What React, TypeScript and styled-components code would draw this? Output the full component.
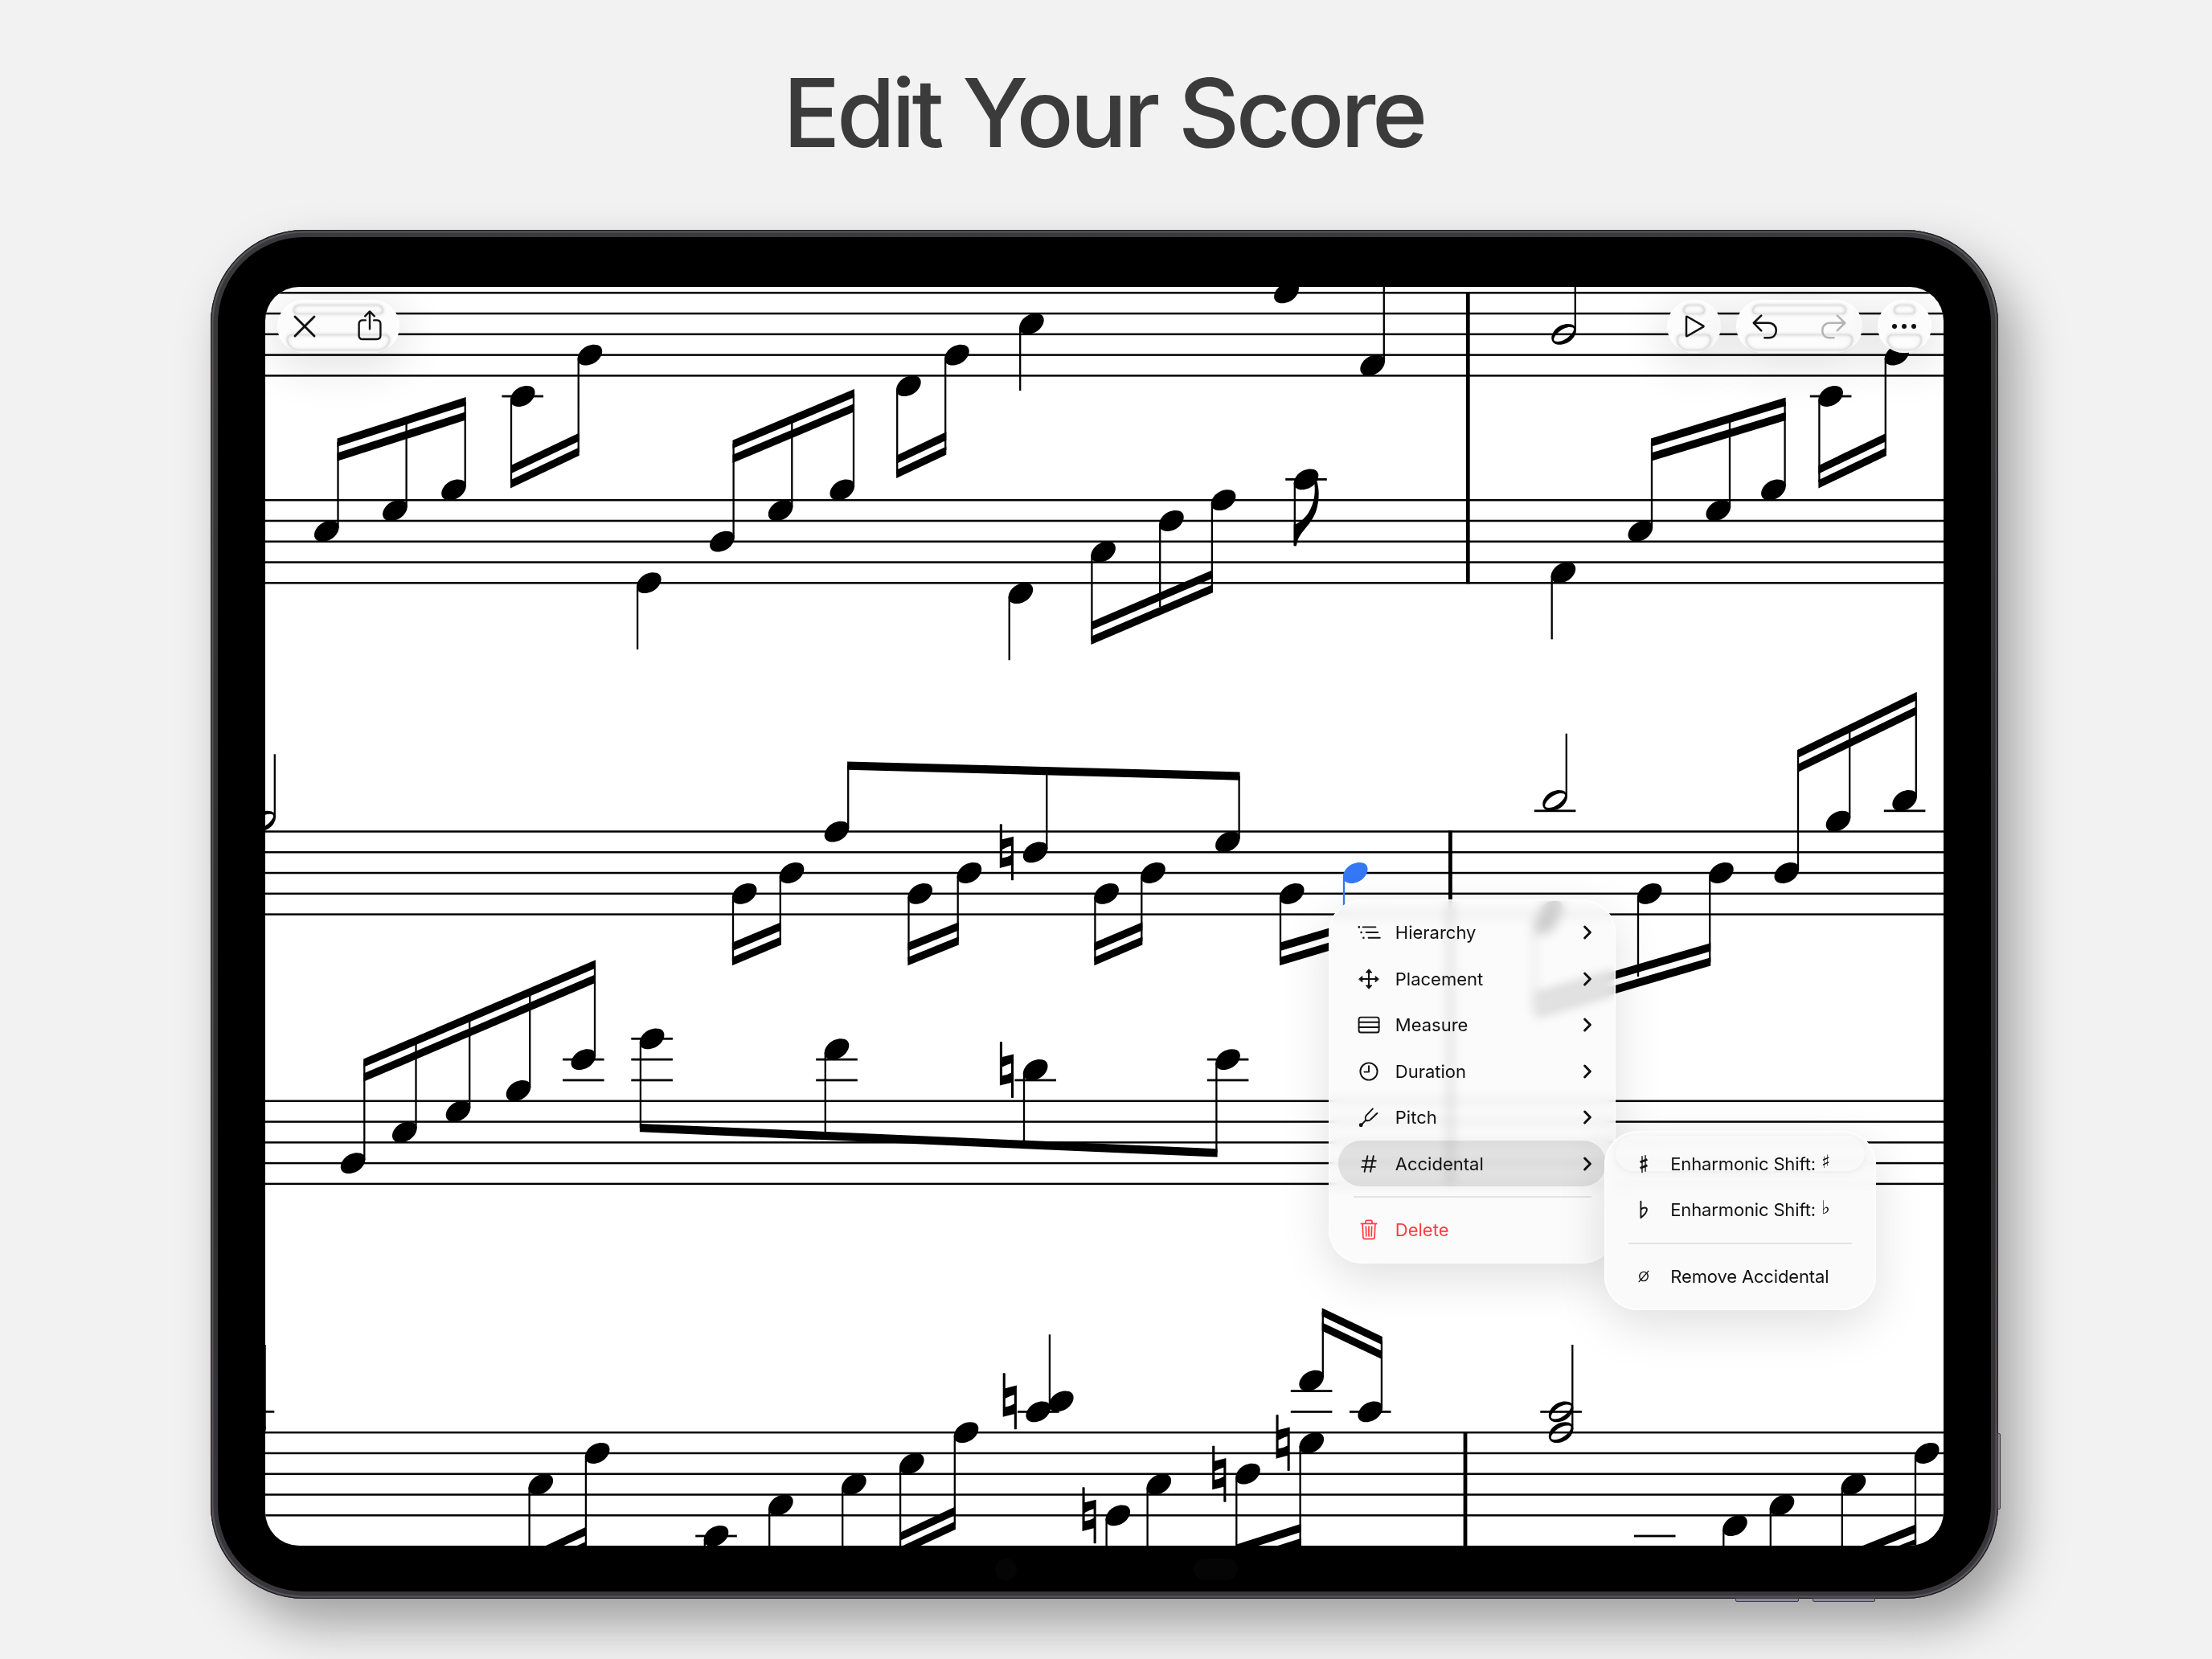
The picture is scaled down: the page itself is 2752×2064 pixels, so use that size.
import React from 'react'
import styled, { createGlobalStyle, css } from 'styled-components'

type Point = [number, number]

type NoteProps = {
  x: number
  y: number
  // y of the far end of the stem
  stem?: number
  half?: boolean
  natural?: boolean
  ledgers?: number[]
  color?: string
}

type BeamProps = {
  from: Point
  to: Point
  // the edge the two points lie on
  edge: 'top' | 'bottom'
  double?: boolean
}

const STAFF_GAP = 25.77
const BEAM = 10.3
const BEAM_STEP = 18.05
const STEM_X = 14.2

const HEAD =
  'M-15.3 4.6C-15.3-4-5.4-12.9 5-12.9C12-12.9 15.3-9.4 15.3-4.6C15.3 4 5.4 12.9-5 12.9C-12 12.9-15.3 9.4-15.3 4.6Z'
const HOLE =
  'M-12.4 6.4C-12.4 1.6-2-8.8 7.6-8.8C11-8.8 12.4-8.2 12.4-6.2C12.4-1.6 2 9-7.4 9C-11 9-12.4 8.4-12.4 6.4Z'

const staves = [364.3, 622.2, 1034.5, 1369.8, 1782.2]

const barlines = [
  { x: 1826.3, y1: 363.2, y2: 726.4 },
  { x: 1804.4, y1: 1033.3, y2: 1474.2 },
  { x: 1823, y1: 1781, y2: 1940 },
]

const looseLedgers: [number, number][] = [
  [315.5, 1756.3],
  [2058.7, 1911],
]

const notes: NoteProps[] = [
  // first system
  { x: 406.3, y: 660.8, stem: 550 },
  { x: 491.4, y: 635.1, stem: 525 },
  { x: 564.5, y: 609.3, stem: 500 },
  { x: 650.2, y: 493, stem: 600, ledgers: [493] },
  { x: 733.9, y: 441.6, stem: 562 },
  { x: 807.3, y: 725.2, stem: 808 },
  { x: 898.4, y: 673.7, stem: 552 },
  { x: 971.1, y: 635.1, stem: 520 },
  { x: 1047.8, y: 609.3, stem: 490 },
  { x: 1130.4, y: 480.2, stem: 590 },
  { x: 1190.4, y: 441.6, stem: 560 },
  { x: 1283.4, y: 402.9, stem: 486 },
  { x: 1600.4, y: 364.3, stem: 340 },
  { x: 1707.6, y: 454.4, stem: 340 },
  { x: 1269.9, y: 738.1, stem: 821.3 },
  { x: 1372.6, y: 686.6, stem: 797 },
  { x: 1457.4, y: 648, stem: 755 },
  { x: 1522.1, y: 622.2, stem: 733 },
  { x: 1625, y: 596.4, stem: 679, ledgers: [596.4] },
  { x: 1945.6, y: 415.9, stem: 340, half: true },
  { x: 2040.8, y: 660.8, stem: 550 },
  { x: 2137.8, y: 635.1, stem: 520 },
  { x: 2206.4, y: 609.3, stem: 500 },
  { x: 2277.6, y: 493, stem: 600, ledgers: [493] },
  { x: 2360, y: 441.6, stem: 562 },
  { x: 1944.9, y: 712.3, stem: 795.4 },

  // second system
  { x: 327.6, y: 1021.6, stem: 938.3, half: true },
  { x: 439.1, y: 1447.1, stem: 1322 },
  { x: 503.3, y: 1408.4, stem: 1295 },
  { x: 570, y: 1382.6, stem: 1266 },
  { x: 645, y: 1356.9, stem: 1234 },
  { x: 725.8, y: 1318.1, stem: 1200, ledgers: [1318.1, 1343.9] },
  { x: 811.1, y: 1292.3, stem: 1403, ledgers: [1292.3, 1318.1, 1343.9] },
  { x: 1041, y: 1305.2, stem: 1412, ledgers: [1318.1, 1343.9] },
  { x: 1288.2, y: 1331, stem: 1422, ledgers: [1343.9], natural: true },
  { x: 1527.6, y: 1318.1, stem: 1434, ledgers: [1318.1, 1343.9] },
  { x: 1041, y: 1034.6, stem: 952 },
  { x: 1288.1, y: 1060.3, stem: 958, natural: true },
  { x: 1527.4, y: 1047.4, stem: 965 },
  { x: 926.2, y: 1111.8, stem: 1196 },
  { x: 985, y: 1086, stem: 1171 },
  { x: 1144.7, y: 1111.8, stem: 1196 },
  { x: 1205.9, y: 1086, stem: 1171 },
  { x: 1376.6, y: 1111.8, stem: 1196 },
  { x: 1434.5, y: 1086, stem: 1171 },
  { x: 1607.2, y: 1111.8, stem: 1196 },
  { x: 1686.2, y: 1086, stem: 1140, color: '#3478f6' },
  { x: 1934.6, y: 995.9, stem: 912.7, half: true, ledgers: [1008.8] },
  { x: 2222.8, y: 1086, stem: 938 },
  { x: 2287, y: 1021.7, stem: 905 },
  { x: 2369.6, y: 995.9, stem: 866, ledgers: [1008.8] },
  { x: 1929, y: 1134 },
  { x: 1923, y: 1149, stem: 1260 },
  { x: 2052.2, y: 1111.8, stem: 1215 },
  { x: 2141.4, y: 1086, stem: 1197 },

  // third system
  { x: 315.4, y: 1782.2, stem: 1673 },
  { x: 672.8, y: 1846.6, stem: 1940 },
  { x: 743.1, y: 1808, stem: 1925 },
  { x: 891, y: 1911, stem: 1940, ledgers: [1911] },
  { x: 971.4, y: 1872.4, stem: 1940 },
  { x: 1062.4, y: 1846.6, stem: 1940 },
  { x: 1134.3, y: 1820.9, stem: 1930 },
  { x: 1202, y: 1782.2, stem: 1897 },
  { x: 1291.7, y: 1756.4, stem: 1660.3, ledgers: [1756.4] },
  { x: 1631.6, y: 1717.7, stem: 1632, ledgers: [1730.6, 1756.4] },
  { x: 1704.7, y: 1756.4, stem: 1668, ledgers: [1756.4] },
  { x: 1631.8, y: 1795.1, stem: 1940, natural: true },
  { x: 1552.5, y: 1833.7, stem: 1940, natural: true },
  { x: 1390.8, y: 1885.3, stem: 1940, natural: true },
  { x: 1441.8, y: 1846.6, stem: 1940 },
  { x: 1942.1, y: 1756.4, half: true, ledgers: [1756.4] },
  { x: 1942.1, y: 1782.2, stem: 1673, half: true },
  { x: 2158.5, y: 1898.2, stem: 1940 },
  { x: 2217, y: 1872.4, stem: 1940 },
  { x: 2306, y: 1846.6, stem: 1940 },
  { x: 2397.2, y: 1808, stem: 1940 },
]

const beams: BeamProps[] = [
  { from: [419.5, 545.4], to: [579.7, 494.1], edge: 'top', double: true },
  { from: [635, 607.5], to: [720.7, 566.8], edge: 'bottom', double: true },
  { from: [911.5, 547.7], to: [1063, 484], edge: 'top', double: true },
  { from: [1115.1, 595], to: [1177.3, 565.7], edge: 'bottom', double: true },
  { from: [1357.4, 802], to: [1509, 737.3], edge: 'bottom', double: true },
  { from: [2054, 545.4], to: [2221.6, 494.6], edge: 'top', double: true },
  { from: [2262.4, 607.5], to: [2346.9, 567], edge: 'bottom', double: true },
  { from: [452.2, 1317.5], to: [741, 1194.3], edge: 'top', double: true },
  { from: [795.9, 1408.2], to: [1514.6, 1439.6], edge: 'bottom' },
  { from: [1054.1, 947.5], to: [1542.6, 960.5], edge: 'top' },
  { from: [910.9, 1201.2], to: [972, 1175.5], edge: 'bottom', double: true },
  { from: [1129.4, 1201.2], to: [1192.8, 1175.5], edge: 'bottom', double: true },
  { from: [1361.3, 1201.2], to: [1421.4, 1175.5], edge: 'bottom', double: true },
  { from: [1592, 1201.2], to: [1654, 1182.8], edge: 'bottom', double: true },
  { from: [2236, 933], to: [2384.8, 860.7], edge: 'top', double: true },
  { from: [1910.8, 1265], to: [2128.3, 1201.5], edge: 'bottom', double: true },
  { from: [657.6, 1961.3], to: [730, 1927.7], edge: 'bottom', double: true },
  { from: [1119, 1935.3], to: [1188.9, 1902.7], edge: 'bottom', double: true },
  { from: [1644.7, 1627.3], to: [1719.8, 1663], edge: 'top', double: true },
  { from: [1537.4, 1950.1], to: [1618.8, 1924], edge: 'bottom', double: true },
  { from: [2290.8, 1962], to: [2384.1, 1924.7], edge: 'bottom', double: true },
]

const Note = ({ x, y, stem, half, natural, ledgers = [], color = '#000' }: NoteProps) => {
  const up = stem !== undefined && stem < y
  const stemX = up ? x + STEM_X : x - STEM_X
  return (
    <g fill={color} stroke="none">
      {ledgers.map(ly => (
        <rect key={ly} x={x - 25.8} y={ly - 1.4} width={51.6} height={2.8} />
      ))}
      {stem !== undefined && (
        <line x1={stemX} x2={stemX} y1={up ? y - 4 : y + 4} y2={stem} stroke={color} strokeWidth={2.3} />
      )}
      <path d={half ? HEAD + HOLE : HEAD} fillRule="evenodd" transform={`translate(${x} ${y})`} />
      {natural && <Natural x={x - 35.7} y={y} />}
    </g>
  )
}

const Natural = ({ x, y }: { x: number; y: number }) => (
  <path
    transform={`translate(${x} ${y})`}
    fillRule="evenodd"
    d="M-8.6-34.2Q-8.6-35-7.8-35H-6.3Q-5.5-35-5.5-34.2V-16L8.6-19.6V34.2Q8.6 35 7.8 35H6.3Q5.5 35 5.5 34.2V16L-8.6 19.6ZM-5.5-3.4V7.2Q0 6.8 5.5 3.4V-8Q1-7-5.5-3.4Z"
  />
)

const Beam = ({ from, to, edge, double }: BeamProps) => {
  const dir = edge === 'top' ? 1 : -1
  const rows = double ? [0, BEAM_STEP] : [0]
  return (
    <>
      {rows.map(off => {
        const a = off * dir
        const b = (off + BEAM) * dir
        return (
          <polygon
            key={off}
            points={`${from[0]},${from[1] + a} ${to[0]},${to[1] + a} ${to[0]},${to[1] + b} ${from[0]},${from[1] + b}`}
          />
        )
      })}
    </>
  )
}

const Score = () => (
  <ScoreSheet viewBox="330 357 2088 1565.5">
    {staves.map(top =>
      [0, 1, 2, 3, 4].map(i => (
        <rect key={`${top}-${i}`} x={320} y={top + i * STAFF_GAP - 1.25} width={2110} height={2.5} />
      ))
    )}
    {barlines.map(b => (
      <rect key={b.x} x={b.x - 2.4} y={b.y1} width={4.8} height={b.y2 - b.y1} />
    ))}
    {looseLedgers.map(([x, y]) => (
      <rect key={x} x={x - 25.8} y={y - 1.4} width={51.6} height={2.8} />
    ))}
    {beams.map((b, i) => (
      <Beam key={i} {...b} />
    ))}
    {notes.map((n, i) => (
      <Note key={i} {...n} />
    ))}
    {/* second of the chord sits on the other side of the stem */}
    <Note x={1320.3} y={1743.4} />
    <Natural x={1256.3} y={1743.2} />
    {/* eighth flag */}
    <path d="M1609.7 652.8C1626 648 1640 625 1634.6 597L1637.6 596C1641.5 607 1642 621 1637.4 636C1630 656 1616 661 1613.4 677Q1613 679.6 1611.4 679.6Q1609.7 679.6 1609.7 678Z" />
  </ScoreSheet>
)

const Chevron = () => (
  <Stroke width={14} height={22} viewBox="-7 -11 14 22" $weight={3}>
    <path d="M-3.4-7L3.4 0L-3.4 7" />
  </Stroke>
)

const icons: Record<string, React.ReactNode> = {
  hierarchy: (
    <>
      <path d="M-7.4-6.6H8.4M-3.4 0H11.2M-.4 6.7H13.8" />
      <path d="M-12.2-6.6h.01M-9.4 0h.01M-6.6 6.7h.01" strokeWidth={2.6} />
    </>
  ),
  placement: (
    <>
      <path d="M-9 0H9M0-9V9" strokeWidth={2.1} />
      <path
        d="M-12.2 0L-8.2-3.4V3.4ZM12.2 0L8.2-3.4V3.4ZM0-12L-3.5-8H3.5ZM0 12L-3.5 8H3.5Z"
        fill="currentColor"
        strokeWidth={1}
      />
    </>
  ),
  measure: (
    <>
      <rect x={-12.4} y={-9.4} width={25} height={18.9} rx={2.6} />
      <path d="M-12.4-3.2H12.6M-12.4 3H12.6" />
    </>
  ),
  duration: (
    <>
      <circle r={10.6} />
      <path d="M0-6.8V.6H-5.6" />
    </>
  ),
  pitch: (
    <>
      <path d="M4.9-10.6L-3.3-2.2Q-5 .2-4 3.6Q-.4 5.4 2.2 2.8L10.4-5M-4 3.8L-9.2 9.4" />
      <circle cx={-9.8} cy={9.8} r={1.5} fill="currentColor" />
    </>
  ),
  accidental: <path d="M-1.6-9.8L-5.4 9.8M5.8-9.8L2 9.8M-7.8-3.7H8.8M-8.8 3.9H7.8" />,
  trash: (
    <path
      d="M-9.6-7.6H9.6M-4-7.8V-10Q-4-11.6-2.4-11.6H2.4Q4-11.6 4-10V-7.8M-7.9-7.4L-7.1 9.2Q-7 11.4-4.8 11.4H4.8Q7 11.4 7.1 9.2L7.9-7.4M-3.6-4L-3.2 7.8M0-4V7.8M3.6-4L3.2 7.8"
      strokeWidth={1.7}
    />
  ),
  sharp: (
    <>
      <path d="M-2-9.2V10.6M2-10.6V9.2" strokeWidth={1.4} />
      <path d="M-4.4-2.1L4.4-5.5M-4.4 5.3L4.4 1.9" strokeWidth={2.8} strokeLinecap="butt" />
    </>
  ),
  flat: <path d="M-3.6-10.4V10C-1 8 3.9 4.4 3.9-.2C3.9-3.4-1.2-3.2-3.6 0" />,
  none: (
    <>
      <ellipse rx={5.2} ry={5.6} strokeWidth={1.4} />
      <path d="M-5.8 6.6L5.8-6.6" strokeWidth={1.4} />
    </>
  ),
}

const mainItems = [
  { icon: 'hierarchy', label: 'Hierarchy' },
  { icon: 'placement', label: 'Placement' },
  { icon: 'measure', label: 'Measure' },
  { icon: 'duration', label: 'Duration' },
  { icon: 'pitch', label: 'Pitch' },
  { icon: 'accidental', label: 'Accidental', active: true },
]

const MenuIcon = ({ name }: { name: string }) => (
  <IconSlot>
    <Stroke width={32} height={28} viewBox="-16 -14 32 28" $weight={1.9}>
      {icons[name]}
    </Stroke>
  </IconSlot>
)

const App = () => {
  return (
    <Page>
      <GlobalStyle />
      <Title>Edit Your Score</Title>
      <Device>
        <SideButton />
        <VolumeButtons>
          <VolumeButton />
          <VolumeButton />
        </VolumeButtons>
        <Bezel>
          <Sensors>
            <Sensor $width={27} />
            <Sensor $width={55} />
          </Sensors>
          <Screen>
            <Score />

            <Toolbar>
              <GlassGroup $width={151.5}>
                <ToolButton $width={68}>
                  <Stroke width={32} height={32} viewBox="-16 -16 32 32" $weight={2.9}>
                    <path d="M-12-12L12 12M12-12L-12 12" />
                  </Stroke>
                </ToolButton>
                <ToolButton $width={83.5} $shift={11}>
                  <Stroke width={34} height={42} viewBox="-17 -21 34 42" $weight={2.4}>
                    <path d="M-5.2-7.6H-8.6Q-13.4-7.6-13.4-3V11.4Q-13.4 16-8.6 16H8.6Q13.4 16 13.4 11.4V-3Q13.4-7.6 8.6-7.6H5.2M0 3.2V-18M-5.8-12.6L0-18.6L5.8-12.6" />
                  </Stroke>
                </ToolButton>
              </GlassGroup>

              <ToolbarEnd>
                <GlassGroup $width={67}>
                  <Stroke width={34} height={34} viewBox="-17 -17 34 34" $weight={2.5}>
                    <path d="M-9-11.4V11.4Q-9 12.8-7.7 12L12 .7Q13 0 12-.7L-7.7-12Q-9-12.8-9-11.4Z" />
                  </Stroke>
                </GlassGroup>
                <GlassGroup $width={157}>
                  <ToolButton $width={73}>
                    <UndoIcon />
                  </ToolButton>
                  <ToolButton $width={84} $shift={12} $disabled>
                    <UndoIcon flip />
                  </ToolButton>
                </GlassGroup>
                <GlassGroup $width={67}>
                  <Dots>
                    <Dot />
                    <Dot />
                    <Dot />
                  </Dots>
                </GlassGroup>
              </ToolbarEnd>
            </Toolbar>

            <ContextMenu>
              {mainItems.map(item => (
                <MenuRow key={item.label} $active={item.active}>
                  <MenuIcon name={item.icon} />
                  <Label>{item.label}</Label>
                  <Chevron />
                </MenuRow>
              ))}
              <Divider />
              <MenuRow $danger>
                <MenuIcon name="trash" />
                <Label>Delete</Label>
              </MenuRow>
            </ContextMenu>

            <SubMenu>
              <SubRow>
                <MenuIcon name="sharp" />
                <Label>
                  Enharmonic Shift: <Sign>♯</Sign>
                </Label>
              </SubRow>
              <SubRow>
                <MenuIcon name="flat" />
                <Label>
                  Enharmonic Shift: <Sign>♭</Sign>
                </Label>
              </SubRow>
              <Divider />
              <SubRow>
                <MenuIcon name="none" />
                <Label>Remove Accidental</Label>
              </SubRow>
            </SubMenu>
          </Screen>
        </Bezel>
      </Device>
    </Page>
  )
}

const UndoIcon = ({ flip }: { flip?: boolean }) => (
  <Stroke width={36} height={36} viewBox="-18 -18 36 36" $weight={2.6}>
    <path
      transform={flip ? 'scale(-1 1)' : undefined}
      d="M-4.8-13.4L-14.2-4.2L-4.8 5.4M-13.8-4.2H3.8C10.4-4.2 13.8 0 13.8 5C13.8 10.4 10.4 14.2 5 14.2H-.6"
    />
  </Stroke>
)

export default App

const GlobalStyle = createGlobalStyle`
  * {
    box-sizing: border-box;
  }
  body {
    margin: 0;
    overflow: hidden;
    background: #f2f2f2;
    font-family: Inter, 'Liberation Sans', sans-serif;
  }
`

const Page = styled.div`
  width: 2752px;
  height: 2064px;
  overflow: hidden;
  display: flex;
  flex-direction: column;
  align-items: center;
  background: #f2f2f2;
`

const Title = styled.h1`
  height: 286px;
  flex: none;
  margin: 0;
  padding: 0 6px 7px 0;
  display: flex;
  align-items: center;
  font-size: 118px;
  font-weight: 500;
  letter-spacing: -4.5px;
  color: #3b3b3b;
`

const Device = styled.div`
  position: relative;
  flex: none;
  width: 2224px;
  height: 1703px;
  margin-right: 4px;
  padding: 9px;
  border-radius: 116px;
  background: linear-gradient(#3a393b, #2e2d2f 60%, #39373b);
  box-shadow:
    inset 0 0 0 1.2px #1d1c1e,
    inset 0 0 0 3.5px #565458,
    22px 32px 62px rgba(0, 0, 0, 0.34);
`

const Bezel = styled.div`
  position: relative;
  width: 100%;
  height: 100%;
  padding: 62px 59px 56.5px;
  border-radius: 107px;
  background: #000;
`

const SideButton = styled.div`
  position: absolute;
  left: 2223px;
  top: 1497px;
  width: 4px;
  height: 95px;
  border-radius: 0 2px 2px 0;
  border: 1px solid #3c3a3e;
  background: #8d8b90;
`

const VolumeButtons = styled.div`
  position: absolute;
  top: 1702px;
  left: 1897px;
  display: flex;
  gap: 17px;
`

const VolumeButton = styled.div`
  width: 78.5px;
  height: 5px;
  border-radius: 0 0 2px 2px;
  border: 1px solid #3c3a4e;
  background: #8d8b98;
`

const Sensors = styled.div`
  position: absolute;
  left: 967px;
  bottom: 14px;
  display: flex;
  gap: 220px;
`

const Sensor = styled.div<{ $width: number }>`
  width: ${p => p.$width}px;
  height: 27px;
  border-radius: 14px;
  background: #050505;
`

const Screen = styled.div`
  position: relative;
  width: 2088px;
  height: 1565.5px;
  overflow: hidden;
  border-radius: 42px;
  background: #fff;
`

const ScoreSheet = styled.svg`
  display: block;
  width: 2088px;
  height: 1565.5px;
`

const Stroke = styled.svg<{ $weight: number }>`
  flex: none;
  display: block;
  overflow: visible;
  fill: none;
  stroke: currentColor;
  stroke-width: ${p => p.$weight};
  stroke-linecap: round;
  stroke-linejoin: round;
`

const Toolbar = styled.div`
  position: absolute;
  top: 16px;
  left: 15px;
  right: 15.5px;
  display: flex;
  justify-content: space-between;
`

const ToolbarEnd = styled.div`
  display: flex;
  gap: 19px;
`

const GlassGroup = styled.div<{ $width: number }>`
  position: relative;
  width: ${p => p.$width}px;
  height: 66px;
  display: flex;
  align-items: center;
  justify-content: center;
  color: #111;
  border-radius: 33px;
  background: #fcfcfc;
  box-shadow:
    inset 0 0 4px 2px #fff,
    0 12px 56px 8px rgba(0, 0, 0, 0.11);

  &::before,
  &::after {
    content: '';
    position: absolute;
    box-shadow:
      inset 0 0 5px rgba(0, 0, 0, 0.26),
      0 0 4px rgba(0, 0, 0, 0.17);
  }
  &::before {
    top: 6px;
    left: 20px;
    right: 20px;
    height: 12px;
    border-radius: 10px 10px 6px 6px;
  }
  &::after {
    top: 43px;
    left: 12px;
    right: 12px;
    height: 20px;
    border-radius: 8px 8px 20px 20px;
  }
  & > * {
    position: relative;
    z-index: 1;
  }
`

const ToolButton = styled.div<{ $width: number; $shift?: number; $disabled?: boolean }>`
  width: ${p => p.$width}px;
  padding-left: ${p => p.$shift || 0}px;
  display: flex;
  align-items: center;
  justify-content: center;
  ${p => p.$disabled && css`
    color: #b4b4b4;
  `}
`

const Dots = styled.div`
  display: flex;
  gap: 5.6px;
`

const Dot = styled.div`
  width: 6.4px;
  height: 6.4px;
  border-radius: 50%;
  background: #111;
`

const Panel = styled.div`
  position: absolute;
  padding: 12.3px;
  color: #111;
  border-radius: 42px;
  background: rgba(250, 250, 250, 0.82);
  backdrop-filter: blur(7px);
  box-shadow:
    inset 0 0 0 1.5px rgba(255, 255, 255, 0.9),
    0 18px 60px rgba(0, 0, 0, 0.13);
`

const ContextMenu = styled(Panel)`
  left: 1323px;
  top: 762px;
  width: 357px;
  height: 452.5px;
`

const SubMenu = styled(Panel)`
  left: 1665.5px;
  top: 1049.7px;
  width: 338px;
  height: 223px;
  background: rgba(250, 250, 250, 0.94);

  /* light bending along the top edge */
  &::before {
    content: '';
    position: absolute;
    top: 6px;
    left: 14px;
    right: 14px;
    height: 44px;
    border-radius: 30px;
    box-shadow: 0 2px 10px rgba(0, 0, 0, 0.06);
  }
`

const MenuRow = styled.div<{ $active?: boolean; $danger?: boolean }>`
  height: 57.5px;
  padding: 0 15.5px 0 21.5px;
  display: flex;
  align-items: center;
  border-radius: 28px;
  color: ${p => (p.$danger ? '#ff3b40' : 'inherit')};
  ${p => p.$active && css`
    background: rgba(0, 0, 0, 0.095);
  `}
`

const SubRow = styled(MenuRow)`
  position: relative;
  letter-spacing: -0.15px;
`

const IconSlot = styled.div`
  width: 49px;
  flex: none;
`

const Label = styled.span`
  flex: 1;
  font-size: 22px;
  line-height: 26px;
  white-space: nowrap;
`

const Sign = styled.span`
  margin-left: 1px;
  font-family: 'DejaVu Sans', sans-serif;
  font-size: 23px;
  font-weight: 700;
  line-height: 0;
  vertical-align: 3px;
`

const Divider = styled.div`
  height: 2px;
  margin: 11.7px 17.5px 11.6px 18.5px;
  background: rgba(0, 0, 0, 0.09);
`
